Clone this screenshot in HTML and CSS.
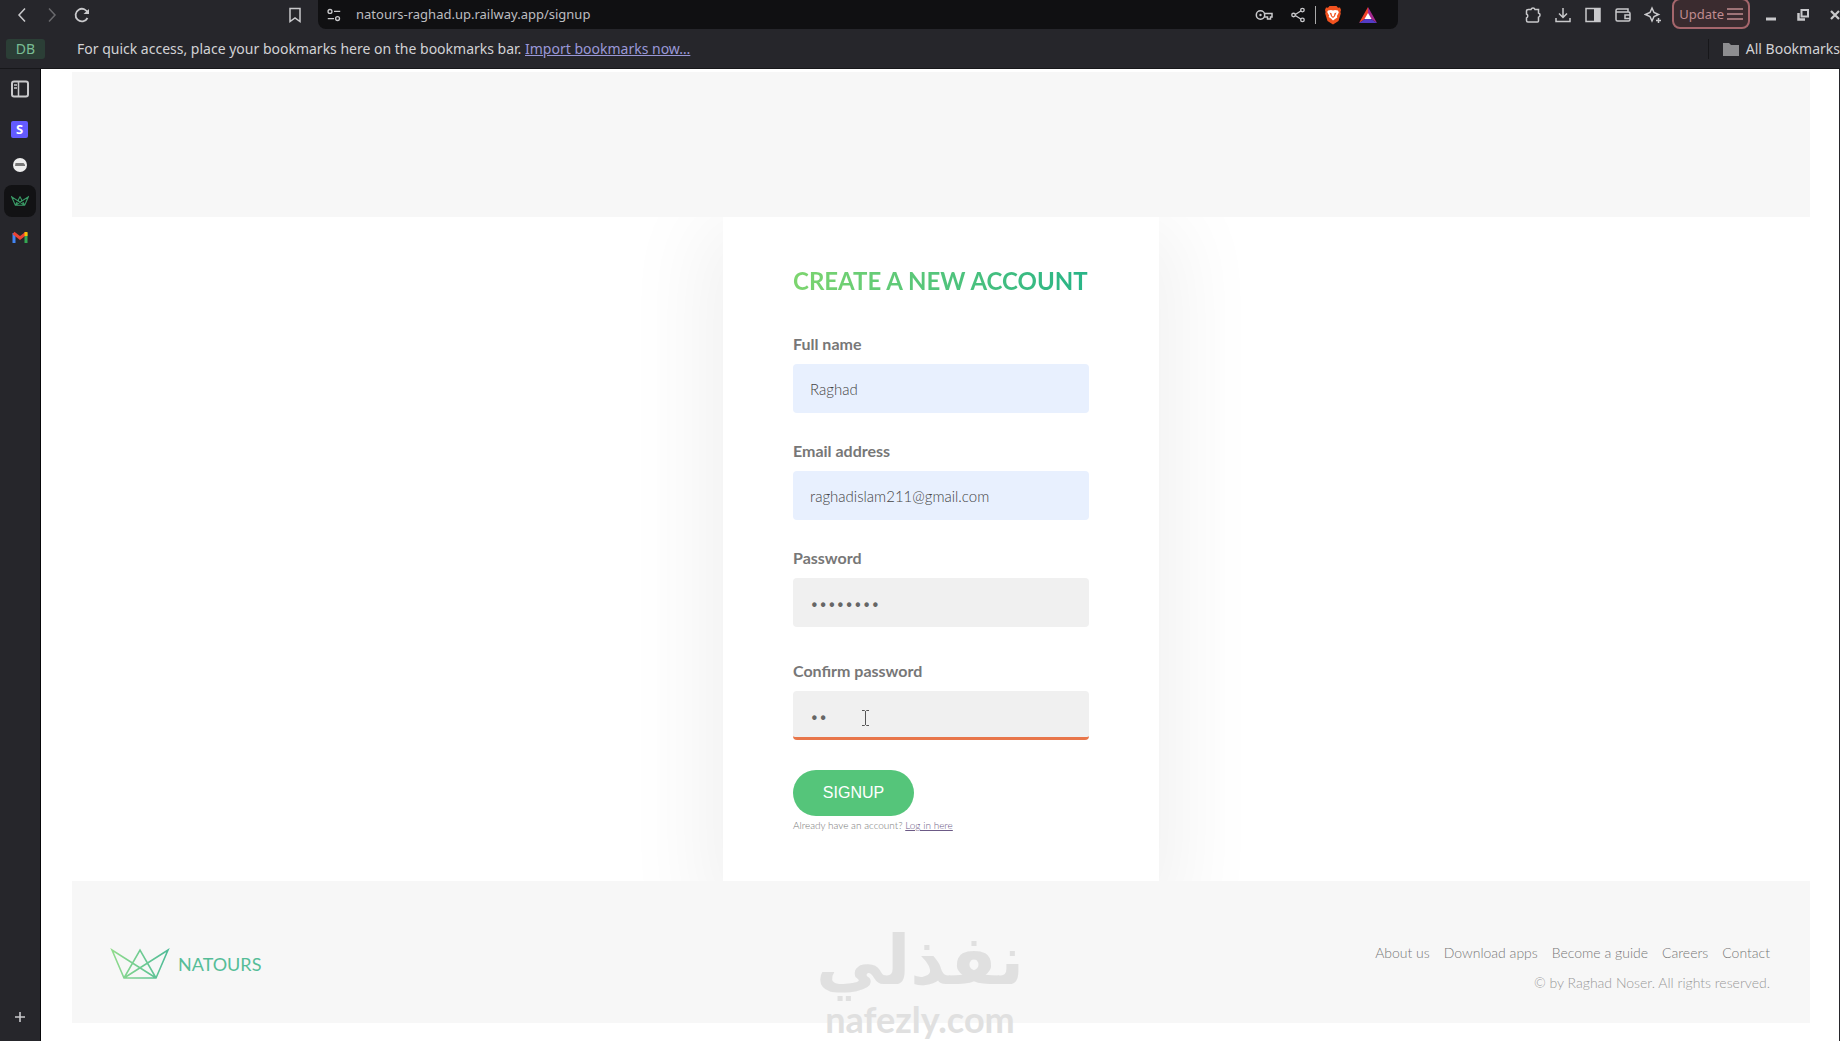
FILE: index.html
```html
<!DOCTYPE html>
<html lang="en">
<head>
<meta charset="utf-8">
<title>Natours | Create a new account</title>
<link rel="stylesheet" href="styles.css">
</head>
<body>
<div class="browser">
  <div class="toolbar">
    <div class="tools-left">
      <button class="icon-btn" aria-label="Back"><svg width="18" height="18" viewBox="0 0 18 18"><path d="M12 2.500 6 9l6 6.500"/></svg></button>
      <button class="icon-btn dim" aria-label="Forward"><svg width="18" height="18" viewBox="0 0 18 18"><path d="M6 2.500 12 9l-6 6.500"/></svg></button>
      <button class="icon-btn" aria-label="Reload"><svg width="18" height="18" viewBox="0 0 18 18"><path d="M14.500 12A6.300 6.300 0 1 1 15 7.500" stroke-width="1.800"/><path d="M10.500 8H16V3z" class="fill"/></svg></button>
      <button class="icon-btn bookmark" aria-label="Bookmark this tab"><svg width="18" height="18" viewBox="0 0 18 18"><path d="M4 2.500h10v13l-5-3.500-5 3.500z"/></svg></button>
    </div>
    <div class="address">
      <svg class="site" width="16" height="16" viewBox="0 0 18 18"><circle cx="4.500" cy="5" r="2.200"/><path d="M9 5h7M2 13h7"/><circle cx="13" cy="13" r="2.200"/></svg>
      <input class="url" aria-label="Address" value="natours-raghad.up.railway.app/signup">
      <div class="address-tools">
        <button class="icon-btn" aria-label="Passwords"><svg width="18" height="18" viewBox="0 0 18 18"><circle cx="5.500" cy="9" r="4.200"/><circle cx="5.500" cy="9" r="1.200" class="fill"/><path d="M9.500 7.500H17v3.500h-1.500v2h-3v-2h-3"/></svg></button>
        <button class="icon-btn" aria-label="Share"><svg width="16" height="16" viewBox="0 0 18 18"><path d="m5 9 8-5M5 9l8 5"/><circle cx="4" cy="9" r="2" class="knot"/><circle cx="14" cy="3.500" r="2" class="knot"/><circle cx="14" cy="14.500" r="2" class="knot"/></svg></button>
        <span class="rule"></span>
        <button class="icon-btn" aria-label="Brave Shields"><svg width="18" height="20" viewBox="0 0 18 20" class="solid"><path fill="#f2521f" d="M5.500 1h7L14 2.800l2-.2 1 2.400-.6 2 .4 1.500-2.300 7.500L9 19.500 3.500 16 1.200 8.500l.4-1.500L1 5l1-2.400 2 .2z"/><path fill="#fff" d="m4 5.500 3-.5 2 .6 2-.6 3 .5.800 2-1.900 3.500.4 1.500-2.300 1.500L9 15.500l-2-2L4.700 12l.4-1.500L3.200 7z"/><path fill="#f2521f" d="m5.500 7.500 2 .8.500 2.500 1 1 1-1 .5-2.500 2-.8-1.700 4L9 13l-1.800-1.500z"/></svg></button>
        <button class="icon-btn rewards" aria-label="Brave Rewards"><svg width="20" height="18" viewBox="0 0 20 18" class="solid"><path fill="#f0422b" d="M10 1 1 17l9-6z"/><path fill="#a3278f" d="m10 1 9 16-9-6z"/><path fill="#543bc4" d="M1 17h18l-9-6z"/><path fill="#fff" d="m10 7 3.500 6h-7z"/></svg></button>
      </div>
    </div>
    <div class="tools-right">
      <button class="icon-btn" aria-label="Extensions"><svg width="18" height="18" viewBox="0 0 18 18"><path d="M4.500 3.500H7a2.100 2.100 0 0 1 4 0h3.500V7a2.200 2.200 0 0 1 0 4.200V15q0 1-1 1H4q-1.500 0-1.500-1.500V12a2.200 2.200 0 0 0 0-4V5q0-1.500 2-1.500z"/></svg></button>
      <button class="icon-btn" aria-label="Downloads"><svg width="18" height="18" viewBox="0 0 18 18"><path d="M9 2v9M5 7.500 9 11.500l4-4M2 12v3.500h14V12"/></svg></button>
      <button class="icon-btn" aria-label="Side panel"><svg width="18" height="18" viewBox="0 0 18 18"><path d="M2 2.500h14v13H2z"/><path d="M10 2.500h6v13h-6z" class="fill"/></svg></button>
      <button class="icon-btn" aria-label="Wallet"><svg width="18" height="18" viewBox="0 0 18 18"><path d="M14 5.500V3H3.500Q2 3 2 4.500v9Q2 15 3.500 15h11q1.500 0 1.500-1.500v-6Q16 6 14.500 6H2M16 9h-5v3.500h5"/></svg></button>
      <button class="icon-btn" aria-label="Leo"><svg width="18" height="18" viewBox="0 0 18 18"><path d="M8 2 10 6.500 14.500 8.500 10 10.500 8 15 6 10.500 1.500 8.500 6 6.500z"/><path d="M14.500 12v5M12 14.500h5"/></svg></button>
      <button class="update">Update <svg width="16" height="14" viewBox="0 0 16 14"><path d="M0 2h16M0 7h16M0 12h16"/></svg></button>
      <div class="window-tools">
        <button class="icon-btn" aria-label="Minimize"><svg width="14" height="14" viewBox="0 0 14 14"><path d="M2 11h10" stroke-width="3"/></svg></button>
        <button class="icon-btn" aria-label="Restore"><svg width="14" height="14" viewBox="0 0 14 14"><path d="M5.500 2H12v6.500H5.500z" stroke-width="2"/><path d="M2.500 5v6.500H9" stroke-width="2.500"/></svg></button>
        <button class="icon-btn" aria-label="Close"><svg width="14" height="14" viewBox="0 0 14 14"><path d="m3 3 8 8M11 3l-8 8" stroke-width="2.200"/></svg></button>
      </div>
    </div>
  </div>
  <div class="bookmarks">
    <span class="profile">DB</span>
    <p>For quick access, place your bookmarks here on the bookmarks bar. <a href="#">Import bookmarks now…</a></p>
    <button class="all"><svg width="18" height="16" viewBox="0 0 18 16"><path d="M1 2h6l2 2h8v11H1z" fill="#8d8d90"/></svg>All Bookmarks</button>
  </div>
  <div class="work">
    <nav class="tabs" aria-label="Vertical tabs">
      <button class="tab" aria-label="Toggle tabs"><svg width="20" height="18" viewBox="0 0 20 18"><rect x="2" y="1.500" width="16" height="15" rx="2" stroke-width="2"/><path d="M8.500 2v14M4 5h3M4 8h3" stroke-width="1.500"/></svg></button>
      <button class="tab stripe" aria-label="Stripe"><span>S</span></button>
      <button class="tab" aria-label="Site"><svg width="14" height="14" viewBox="0 0 14 14" class="solid"><circle cx="7" cy="7" r="7" fill="#eee"/><path d="M2.500 5h8l1.500 1.500V8H2z" fill="#777"/></svg></button>
      <button class="tab active" aria-label="Natours"><svg width="18" height="12" viewBox="0 0 58 31"><path d="m2 2 12 27h30L56 2 14 29 29 2l15 27z" stroke="#3a9a66" stroke-width="3.500"/></svg></button>
      <button class="tab" aria-label="Gmail"><svg width="16" height="12" viewBox="0 0 16 12"><path d="M2 12V2" stroke="#4285f4" stroke-width="3"/><path d="M14 12V2" stroke="#34a853" stroke-width="3"/><path d="m1.500 2 6.500 5 6.500-5" stroke="#ea4335" stroke-width="3"/><path d="M14 1v4" stroke="#fbbc04" stroke-width="3"/></svg></button>
      <button class="tab add" aria-label="New tab"><svg width="12" height="12" viewBox="0 0 12 12"><path d="M6 1v10M1 6h10" stroke-width="1.600"/></svg></button>
    </nav>
    <div class="page">
      <header class="site-header"></header>
      <main class="main">
        <form class="card">
          <h2>Create a new account</h2>
          <div class="group"><label for="name">Full name</label><input id="name" class="filled" type="text" value="Raghad"></div>
          <div class="group"><label for="email">Email address</label><input id="email" class="filled" type="email" value="raghadislam211@gmail.com"></div>
          <div class="group"><label for="password">Password</label><input id="password" type="password" value="password"></div>
          <div class="group confirm"><label for="confirm">Confirm password</label><input id="confirm" class="current" type="password" value="pa">
            <svg class="pointer" width="9" height="18" viewBox="0 0 9 18"><path d="M1 1.500h2.500l1 1 1-1H8M4.500 2v14M1 16.500h2.500l1-1 1 1H8"/></svg>
          </div>
          <button class="signup" type="button">SIGNUP</button>
          <p class="login">Already have an account? <a href="#">Log in here</a></p>
        </form>
      </main>
      <footer class="site-footer">
        <a class="logo" href="#" aria-label="Natours">
          <svg width="60" height="32" viewBox="0 0 60 32"><defs><linearGradient id="leaf" gradientUnits="userSpaceOnUse" x1="0" y1="0" x2="60" y2="0"><stop offset="0" stop-color="#93dc8c"/><stop offset="1" stop-color="#4dbb98"/></linearGradient></defs><path d="m2 2 12 28h32L58 2 14 30 30 2l16 28z" stroke="url(#leaf)" stroke-width="1.600"/></svg>
          <span>NATOURS</span>
        </a>
        <div class="links">
          <ul><li><a href="#">About us</a></li><li><a href="#">Download apps</a></li><li><a href="#">Become a guide</a></li><li><a href="#">Careers</a></li><li><a href="#">Contact</a></li></ul>
          <p>© by Raghad Noser. All rights reserved.</p>
        </div>
      </footer>
      <div class="watermark"><span class="ar" lang="ar" dir="rtl">نفذلي</span><span class="en">nafezly.com</span></div>
    </div>
  </div>
</div>
</body>
</html>
```
FILE: styles.css
```css
* { box-sizing: border-box; }
body { margin: 0; font-family: "Noto Sans", sans-serif; }
p, h2, ul { margin: 0; padding: 0; }
button { border: 0; padding: 0; background: none; font: inherit; color: inherit; }
svg { display: block; fill: none; stroke: currentColor; stroke-width: 1.500px; }
svg.solid { stroke: none; }
.fill { fill: currentColor; stroke: none; }

.browser { height: 100vh; display: grid; grid-template-rows: 29px 40px 1fr; background: #26262b; color: #c9c9cc; overflow: hidden; }
.toolbar { display: flex; }
.tools-left { width: 318px; display: flex; align-items: center; padding: 0 14px 0 13px; gap: 12px; }
.icon-btn { display: grid; place-items: center; width: 18px; height: 28px; flex: none; }
.dim { color: #69696d; }
.bookmark { margin-left: auto; }
.address { flex: 1; display: flex; align-items: center; background: #101012; border-radius: 0 0 8px 8px; padding: 0 20px 0 8px; }
.site { margin-right: 14px; }
.url { flex: 1; min-width: 0; border: 0; padding: 0 0 2px; background: none; color: #bdbdc0; font: 13px/20px "Noto Sans", sans-serif; outline: 0; }
.address-tools { display: flex; align-items: center; gap: 8px; }
.address-tools .icon-btn:first-child { margin-right: 8px; }
.knot { fill: #101012; }
.rule { width: 1px; height: 18px; background: #aaa; }
.rewards { margin-left: 8px; width: 20px; }
.tools-right { width: 442px; display: flex; align-items: center; justify-content: flex-end; gap: 12px; }
.update { display: flex; align-items: center; gap: 3px; height: 31px; align-self: flex-end; margin-left: -2px; padding: 0 5px; border: 2px solid #a5666c; border-radius: 8px; background: #3a2b2f; color: #c08c90; font-size: 13px; line-height: 20px; }
.window-tools { display: flex; gap: 14px; margin-right: -4px; }
.bookmarks { display: flex; align-items: center; padding-left: 6px; font-size: 14px; line-height: 20px; border-bottom: 1px solid #17171a; color: #d2d2d5; }
.profile { width: 39px; height: 20px; margin-right: 32px; border-radius: 3px; background: #2b3e36; color: #79bd94; text-align: center; }
.bookmarks a { color: #9a98d8; }
.all { display: flex; align-items: center; gap: 6px; margin-left: auto; padding-left: 13px; border-left: 1px solid #17171a; white-space: nowrap; }
.all svg { stroke: none; }

.work { display: grid; grid-template-columns: 41px 1fr; min-height: 0; }
.tabs { display: flex; flex-direction: column; align-items: center; gap: 4px; padding: 4px 1px 8px 0; border-right: 1px solid #08080a; }
.tab { display: grid; place-items: center; width: 32px; height: 32px; border-radius: 8px; }
.tab:first-child { margin-bottom: 4px; }
.tab.active { background: #121214; }
.stripe span { width: 17px; height: 17px; border-radius: 2px; background: #635bff; color: #fff; font-size: 13px; font-weight: 700; line-height: 17px; }
.add { margin-top: auto; }

.page { position: relative; overflow: hidden; display: flex; flex-direction: column; padding: 3px 29px 18px 31px; background: #fff; border-right: 1px solid #26262b; font-family: Lato, sans-serif; color: #777; }
.site-header { flex: none; height: 145px; background: #f7f7f7; }
.main { flex: 1; overflow: hidden; display: flex; justify-content: center; }
.card { width: 436px; padding: 47px 70px; background: #fff; box-shadow: 0 25px 80px 20px rgba(0, 0, 0, .06); }
.card h2 { width: max-content; margin-bottom: 31px; font-size: 24px; line-height: 34px; font-weight: 700; text-transform: uppercase; color: transparent; background: linear-gradient(to right, #7dd56f, #28b487); background-clip: text; }
.group { position: relative; margin-bottom: 23px; }
.group label { display: block; margin-bottom: 5px; font-size: 16px; line-height: 30px; font-weight: 700; color: #777; }
.group input { display: block; width: 100%; height: 49px; padding: 0 17px; border: 0; border-top: 3px solid transparent; border-bottom: 3px solid transparent; border-radius: 4px; background: #f0f0f0; color: #666; font: 300 15px/24px Lato, sans-serif; outline: 0; }
.group .filled { background: #e8f0fe; color: #444; }
.group .current { border-bottom-color: #e8764a; }
.confirm { margin-top: 29px; margin-bottom: 30px; }
.pointer { position: absolute; left: 68px; bottom: 13px; color: #555; stroke-width: 1px; }
.signup { display: block; width: 121px; height: 46px; border-radius: 23px; background: #55c57a; color: #fff; font: 16px/24px "Liberation Sans", sans-serif; }
.login { font-size: 10px; line-height: 18px; font-weight: 300; }
.login a { color: #6c5a86; }

.site-footer { flex: none; display: flex; align-items: center; justify-content: space-between; padding: 57px 40px 25px 38px; background: #f7f7f7; }
.logo { display: flex; align-items: center; gap: 8px; padding-bottom: 8px; text-decoration: none; font-size: 18px; line-height: 24px; color: #55bd97; }
.links { font-size: 14px; line-height: 30px; font-weight: 300; text-align: right; color: #999; }
.links ul { display: flex; justify-content: flex-end; gap: 14px; list-style: none; }
.links a { color: #777; text-decoration: none; }
.watermark { position: absolute; left: 50%; bottom: 0; width: 216px; margin-left: -128px; display: flex; flex-direction: column; align-items: center; color: #e0e0e0; }
.ar { font: 700 68px/72px "DejaVu Sans", sans-serif; }
.en { font: 700 36px/44px Lato, sans-serif; }
```
